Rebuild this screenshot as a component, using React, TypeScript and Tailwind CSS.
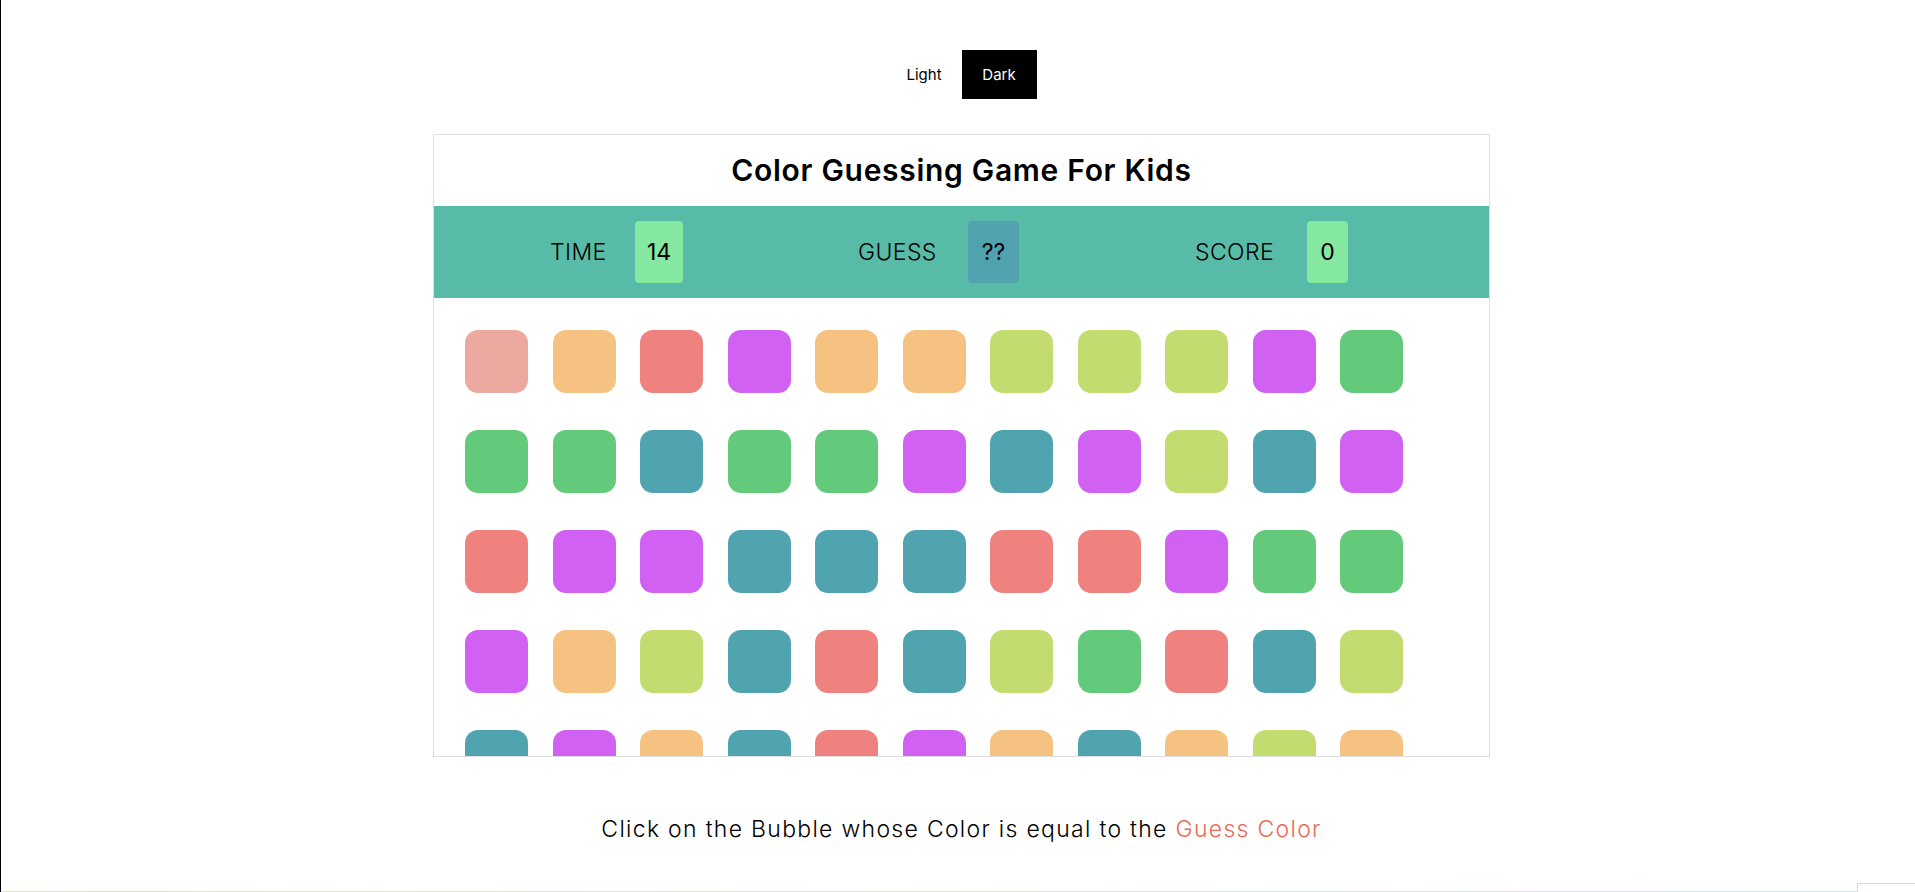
import React from "react";

const C: Record<string, string> = {
  pink: "bg-[#eca99f]",
  orange: "bg-[#f5c282]",
  red: "bg-[#ef827e]",
  purple: "bg-[#d061f3]",
  lime: "bg-[#c3dc6f]",
  green: "bg-[#64ca7b]",
  teal: "bg-[#50a4b0]",
};

const rows: string[][] = [
  ["pink", "orange", "red", "purple", "orange", "orange", "lime", "lime", "lime", "purple", "green"],
  ["green", "green", "teal", "green", "green", "purple", "teal", "purple", "lime", "teal", "purple"],
  ["red", "purple", "purple", "teal", "teal", "teal", "red", "red", "purple", "green", "green"],
  ["purple", "orange", "lime", "teal", "red", "teal", "lime", "green", "red", "teal", "lime"],
  ["teal", "purple", "orange", "teal", "red", "purple", "orange", "teal", "orange", "lime", "orange"],
];

function Stat({ label, value, box, labelW }: { label: string; value: string; box: string; labelW: string }) {
  return (
    <div className="flex items-center">
      <span className={`text-[23px] font-light leading-none text-black tracking-[0.4px] ${labelW}`}>{label}</span>
      <div className={`h-[62px] rounded-[4px] flex items-center justify-center text-[23px] font-normal text-black ${box}`}>
        {value}
      </div>
    </div>
  );
}

export default function App() {
  return (
    <div
      className="relative min-h-[892px] h-[892px] overflow-hidden bg-white border-l border-black flex flex-col"
      style={{ fontFamily: "Inter, 'Noto Sans', sans-serif" }}
    >
      <div className="flex flex-col items-center pl-[7px] pt-[50px]">
        <div className="flex">
          <button className="w-[75px] h-[49px] pt-[2px] text-[15px] text-black bg-white">Light</button>
          <button className="w-[75px] h-[49px] pt-[2px] text-[15px] text-white bg-black">Dark</button>
        </div>

        <div className="mt-[35px] w-[1057px] border border-[#dedede] flex flex-col">
          <div className="h-[71px] flex items-center justify-center">
            <h1 className="text-[30px] font-semibold text-black tracking-[0.7px]">Color Guessing Game For Kids</h1>
          </div>
          <div className="h-[92px] bg-[#58bba7] flex items-center pl-[116px]">
            <Stat label="TIME" value="14" labelW="w-[85px]" box="w-[48px] bg-[#84e8a0]" />
            <div className="w-[175px]" />
            <Stat label="GUESS" value="??" labelW="w-[110px]" box="w-[51px] bg-[#50a3ae]" />
            <div className="w-[176px]" />
            <Stat label="SCORE" value="0" labelW="w-[112px]" box="w-[41px] bg-[#84e8a0]" />
          </div>
          <div className="h-[458px] overflow-hidden pl-[31px] pt-[32px]">
            <div className="grid grid-cols-[repeat(11,63px)] gap-x-[24.5px] gap-y-[37px]">
              {rows.flat().map((c, i) => (
                <div key={i} className={`w-[63px] h-[63px] rounded-[13px] ${C[c]}`} />
              ))}
            </div>
          </div>
        </div>

        <p className="mt-[55px] text-[23px] font-light text-black tracking-[1.3px]">
          Click on the Bubble whose Color is equal to the <span className="text-[#eb6a55]">Guess Color</span>
        </p>
      </div>

      <div className="mt-auto h-[1px] w-full bg-gradient-to-r from-[#e0e6b2] via-[#e3e0d8] to-[#c8eef1]" />
      <div className="absolute right-0 bottom-0 w-[58px] h-[9px] bg-white border-t border-l border-[#d8d8d8]" />
    </div>
  );
}
